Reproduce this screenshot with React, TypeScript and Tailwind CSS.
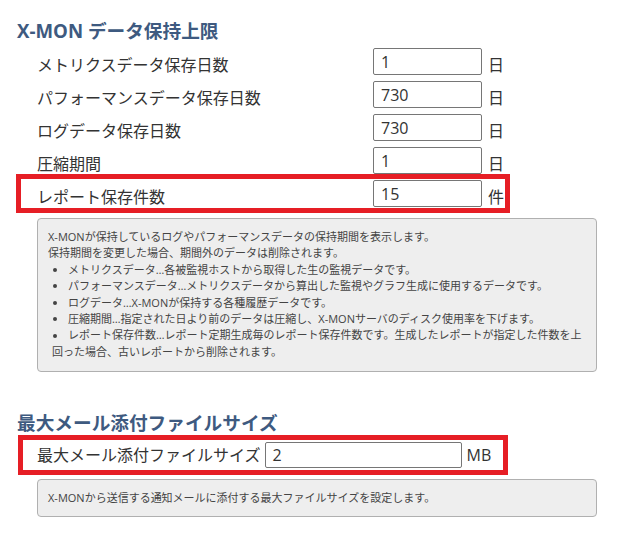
import React from "react";

const font = { fontFamily: '"Open Sans", "Noto Sans CJK JP", sans-serif' };

function Row({ label, value, unit, mark }: { label: string; value: string; unit: string; mark?: boolean }) {
  return (
    <div
      className={
        "ml-[22px] flex h-[27px] w-[482px] items-center pl-[15px] " +
        (mark ? "outline-[5px] outline-offset-[1px] outline-solid outline-[#e61e25]" : "")
      }
    >
      <div className="mt-[6px] w-[336px] text-[16px] leading-[20px] text-[#333]">{label}</div>
      <div className="flex h-[27px] w-[109px] items-center rounded-[2px] border border-[#767676] bg-white pl-[7px] text-[16px] text-[#333]">
        {value}
      </div>
      <div className="ml-[6px] mt-[6px] text-[16px] leading-[20px] text-[#333]">{unit}</div>
    </div>
  );
}

function Bullet({ children }: { children: React.ReactNode }) {
  return (
    <div className="flex items-center whitespace-nowrap pl-[5px]">
      <span className="mr-[11px] h-[4px] w-[4px] shrink-0 rounded-full bg-[#444]" />
      <span>{children}</span>
    </div>
  );
}

export default function App() {
  return (
    <div className="h-[533px] w-[625px] overflow-hidden bg-white" style={font}>
      <div className="pt-[18px]">
        <div className="pl-[17px] text-[18.67px] font-bold leading-[26px] text-[#3e5a80]">
          X-MON データ保持上限
        </div>
        <div className="mt-[4px] flex flex-col gap-[6px]">
          <Row label="メトリクスデータ保存日数" value="1" unit="日" />
          <Row label="パフォーマンスデータ保存日数" value="730" unit="日" />
          <Row label="ログデータ保存日数" value="730" unit="日" />
          <Row label="圧縮期間" value="1" unit="日" />
          <Row label="レポート保存件数" value="15" unit="件" mark />
        </div>
        <div className="ml-[37px] mt-[11px] h-[154px] w-[560px] rounded-[4px] border border-[#b0b0b0] bg-[#eeeeee] px-[10px] pt-[10px] text-[11px] leading-[16.4px] text-[#444]">
          <div className="whitespace-nowrap">X-MONが保持しているログやパフォーマンスデータの保持期間を表示します。</div>
          <div className="whitespace-nowrap">保持期間を変更した場合、期間外のデータは削除されます。</div>
          <Bullet>メトリクスデータ…各被監視ホストから取得した生の監視データです。</Bullet>
          <Bullet>パフォーマンスデータ…メトリクスデータから算出した監視やグラフ生成に使用するデータです。</Bullet>
          <Bullet>ログデータ…X-MONが保持する各種履歴データです。</Bullet>
          <Bullet>圧縮期間…指定された日より前のデータは圧縮し、X-MONサーバのディスク使用率を下げます。</Bullet>
          <Bullet>レポート保存件数…レポート定期生成毎のレポート保存件数です。生成したレポートが指定した件数を上</Bullet>
          <div className="whitespace-nowrap pl-[4px]">回った場合、古いレポートから削除されます。</div>
        </div>

        <div className="mt-[38px] pl-[17px] text-[18.67px] font-bold leading-[26px] text-[#3e5a80]">
          最大メール添付ファイルサイズ
        </div>
        <div className="ml-[23px] mt-[4px] flex h-[30px] w-[480px] items-center pl-[14px] outline-[5px] outline-solid outline-[#e61e25]">
          <div className="text-[16px] leading-[20px] text-[#333]">最大メール添付ファイルサイズ</div>
          <div className="ml-[4px] flex h-[26px] w-[197px] items-center rounded-[2px] border border-[#767676] bg-white pl-[7px] text-[16px] text-[#333]">
            2
          </div>
          <div className="ml-[5px] text-[16px] leading-[20px] text-[#333]">MB</div>
        </div>
        <div className="ml-[37px] mt-[9px] flex h-[38px] w-[560px] items-center rounded-[4px] border border-[#b0b0b0] bg-[#eeeeee] px-[10px] text-[11px] leading-[16.4px] text-[#444]">
          X-MONから送信する通知メールに添付する最大ファイルサイズを設定します。
        </div>
      </div>
    </div>
  );
}
